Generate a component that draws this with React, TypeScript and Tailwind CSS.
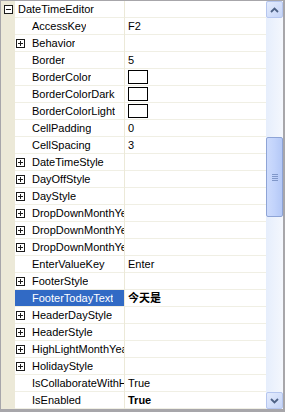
import React from 'react';

type Row = {
  name: string;
  value?: string;
  bold?: boolean;
  expand?: boolean;
  swatch?: boolean;
  root?: boolean;
  selected?: boolean;
};

const rows: Row[] = [
  { name: 'DateTimeEditor', root: true },
  { name: 'AccessKey', value: 'F2' },
  { name: 'Behavior', expand: true },
  { name: 'Border', value: '5' },
  { name: 'BorderColor', swatch: true },
  { name: 'BorderColorDark', swatch: true },
  { name: 'BorderColorLight', swatch: true },
  { name: 'CellPadding', value: '0' },
  { name: 'CellSpacing', value: '3' },
  { name: 'DateTimeStyle', expand: true },
  { name: 'DayOffStyle', expand: true },
  { name: 'DayStyle', expand: true },
  { name: 'DropDownMonthYearButtonStyle', expand: true },
  { name: 'DropDownMonthYearListStyle', expand: true },
  { name: 'DropDownMonthYearStyle', expand: true },
  { name: 'EnterValueKey', value: 'Enter' },
  { name: 'FooterStyle', expand: true },
  { name: 'FooterTodayText', value: '今天是', bold: true, selected: true },
  { name: 'HeaderDayStyle', expand: true },
  { name: 'HeaderStyle', expand: true },
  { name: 'HighLightMonthYearStyle', expand: true },
  { name: 'HolidayStyle', expand: true },
  { name: 'IsCollaborateWithHoliday', value: 'True' },
  { name: 'IsEnabled', value: 'True', bold: true },
];

function ToggleBox({ open }: { open?: boolean }) {
  return (
    <span className="relative block h-[9px] w-[9px] shrink-0 border border-[#1b1b1b] bg-white">
      <span className="absolute left-[1px] top-[3px] h-px w-[5px] bg-[#1b1b1b]" />
      {!open && <span className="absolute left-[3px] top-[1px] h-[5px] w-px bg-[#1b1b1b]" />}
    </span>
  );
}

function Chevron({ down }: { down?: boolean }) {
  return (
    <svg width="9" height="6" viewBox="0 0 9 6" className={down ? 'rotate-180' : ''}>
      <path d="M1 5 L4.5 1.5 L8 5" fill="none" stroke="#4d6185" strokeWidth="1.8" />
    </svg>
  );
}

function ScrollButton({ down }: { down?: boolean }) {
  return (
    <div className="flex h-[17px] w-[17px] items-center justify-center rounded-[2px] border border-[#b5c6ef] bg-gradient-to-br from-[#e4ecfd] to-[#c5d4f7]">
      <Chevron down={down} />
    </div>
  );
}

function Scrollbar() {
  return (
    <div className="flex w-[17px] flex-col bg-gradient-to-r from-[#e6eefc] to-[#f4f7fd]">
      <ScrollButton />
      <div className="h-[119px]" />
      <div className="flex h-[80px] items-center justify-center rounded-[2px] border border-[#8ea4d6] bg-gradient-to-r from-[#cddbfc] via-[#c2d3fb] to-[#b4c8f6]">
        <div className="flex flex-col gap-px">
          <span className="block h-px w-[6px] bg-[#8097c9]" />
          <span className="block h-px w-[6px] bg-[#8097c9]" />
          <span className="block h-px w-[6px] bg-[#8097c9]" />
          <span className="block h-px w-[6px] bg-[#8097c9]" />
        </div>
      </div>
      <div className="flex-1" />
      <ScrollButton down />
    </div>
  );
}

function GridRow({ row }: { row: Row }) {
  return (
    <div className="flex h-[17px]">
      <div className="flex w-[14px] shrink-0 items-center justify-center bg-[#ece9d8] pb-px">
        {row.root && <ToggleBox open />}
      </div>
      <div
        className={
          row.selected
            ? 'flex w-[109px] shrink-0 items-center overflow-hidden whitespace-nowrap border-b border-[#f0efe4] bg-[#316ac5] text-white'
            : 'flex w-[109px] shrink-0 items-center overflow-hidden whitespace-nowrap border-b border-[#f0efe4] bg-white text-black'
        }
      >
        {row.root ? (
          <span className="pl-[3px]">{row.name}</span>
        ) : row.expand ? (
          <>
            <span className="ml-[1px] mr-[7px] block shrink-0">
              <ToggleBox />
            </span>
            <span className="min-w-0 overflow-hidden">{row.name}</span>
          </>
        ) : (
          <span className="min-w-0 overflow-hidden pl-[17px]">{row.name}</span>
        )}
      </div>
      <div className="w-px shrink-0 bg-[#ece9d8]" />
      <div className="flex min-w-0 flex-1 items-center border-b border-[#f0efe4] bg-white pl-[3px] text-black">
        {row.swatch ? (
          <span className="mb-px block h-[14px] w-[20px] border border-black bg-white" />
        ) : (
          <span className={row.bold ? 'font-bold' : ''}>{row.value}</span>
        )}
      </div>
    </div>
  );
}

export default function App() {
  return (
    <div className="flex h-[412px] w-[285px] border-t border-l border-r-2 border-b-[3px] border-[#a7a6aa] bg-white font-['Liberation_Sans','Noto_Sans_CJK_SC',sans-serif] text-[11px] leading-none">
      <div className="flex min-w-0 flex-1 flex-col">
        {rows.map((row) => (
          <GridRow key={row.name} row={row} />
        ))}
      </div>
      <Scrollbar />
    </div>
  );
}
